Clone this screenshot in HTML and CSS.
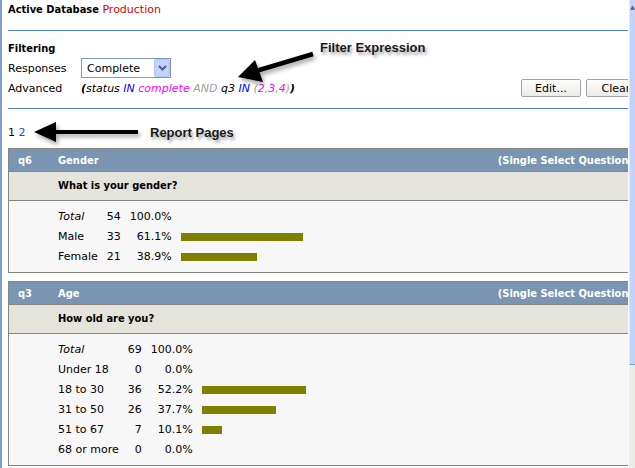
FILE: index.html
```html
<!DOCTYPE html>
<html lang="en">
<head>
  <meta charset="UTF-8" />
  <title>Report</title>
  <link rel="stylesheet" href="styles.css">
</head>
<body>
  <div class="window">
    <main class="page">
      <div class="content">
        <div class="active-db"><b>Active Database</b> <span class="db-name">Production</span></div>
        <div class="rule"></div>

        <!-- Filtering -->
        <section class="filtering">
          <h3>Filtering</h3>
          <div class="filter-row">
            <label>Responses</label>
            <div class="select">
              <span>Complete</span>
              <span class="select-btn">
                <svg width="9" height="6" viewBox="0 0 9 6"><path d="M1 1 L4.5 4.5 L8 1" fill="none" stroke="#4d6185" stroke-width="2"/></svg>
              </span>
            </div>
          </div>
          <div class="filter-row">
            <label>Advanced</label>
            <div class="expr"><b>(</b>status <span class="kw">IN</span> <span class="val">complete</span> <span class="op">AND</span> q3 <span class="kw">IN</span> <span class="op">(</span><span class="val">2</span><span class="op">,</span><span class="val">3</span><span class="op">,</span><span class="val">4</span><span class="op">)</span><b>)</b></div>
            <div class="buttons">
              <button>Edit...</button>
              <button>Clear</button>
            </div>
          </div>
        </section>
        <div class="rule rule-low"></div>

        <!-- Pages -->
        <div class="pager">
          <div class="pages">1 <a href="#">2</a></div>
          <svg class="arrow" width="112" height="22" viewBox="0 0 112 22">
            <defs>
              <filter id="shade" x="-20%" y="-40%" width="150%" height="200%">
                <feDropShadow dx="2" dy="3" stdDeviation="2" flood-color="#000" flood-opacity="0.35"/>
              </filter>
            </defs>
            <g filter="url(#shade)">
              <rect x="24" y="9" width="84" height="4" fill="#000"/>
              <polygon points="4,11 26,1 26,21" fill="#000"/>
            </g>
          </svg>
          <span class="callout-label">Report Pages</span>
        </div>

        <!-- q6 -->
        <div class="question">
          <div class="q-head"><span class="q-num">q6</span><span class="q-title">Gender</span><span class="q-type">(Single Select Question)</span></div>
          <div class="q-text">What is your gender?</div>
          <div class="q-body">
            <table>
              <tr><td><i>Total</i></td><td class="num">54</td><td class="num">100.0%</td><td></td></tr>
              <tr><td>Male</td><td class="num">33</td><td class="num">61.1%</td><td><div class="bar" style="width:122px"></div></td></tr>
              <tr><td>Female</td><td class="num">21</td><td class="num">38.9%</td><td><div class="bar" style="width:76px"></div></td></tr>
            </table>
          </div>
        </div>

        <!-- q3 -->
        <div class="question">
          <div class="q-head"><span class="q-num">q3</span><span class="q-title">Age</span><span class="q-type">(Single Select Question)</span></div>
          <div class="q-text">How old are you?</div>
          <div class="q-body">
            <table>
              <tr><td><i>Total</i></td><td class="num">69</td><td class="num">100.0%</td><td></td></tr>
              <tr><td>Under 18</td><td class="num">0</td><td class="num">0.0%</td><td></td></tr>
              <tr><td>18 to 30</td><td class="num">36</td><td class="num">52.2%</td><td><div class="bar" style="width:104px"></div></td></tr>
              <tr><td>31 to 50</td><td class="num">26</td><td class="num">37.7%</td><td><div class="bar" style="width:74px"></div></td></tr>
              <tr><td>51 to 67</td><td class="num">7</td><td class="num">10.1%</td><td><div class="bar" style="width:20px"></div></td></tr>
              <tr><td>68 or more</td><td class="num">0</td><td class="num">0.0%</td><td></td></tr>
            </table>
          </div>
        </div>
      </div>

      <!-- note pointing at the expression -->
      <div class="callout-filter">
        <svg width="88" height="50" viewBox="0 0 88 50">
          <g filter="url(#shade)">
            <line x1="26" y1="33" x2="83" y2="16" stroke="#000" stroke-width="4.5"/>
            <polygon points="8,39 25,22 33,44" fill="#000"/>
          </g>
        </svg>
        <span class="callout-label">Filter Expression</span>
      </div>
    </main>

    <div class="scrollbar">
      <div class="thumb"><span class="up">&#9650;</span></div>
    </div>
  </div>
</body>
</html>
```

FILE: styles.css
```css
html, body {
  margin: 0;
  padding: 0;
  background: #ffffff;
}
body {
  font-family: "DejaVu Sans", Verdana, sans-serif;
  font-size: 11px;
  color: #000;
  height: 468px;
  overflow: hidden;
}
/* bold labels use the narrower cut */
b,
.filtering h3,
.q-head,
.q-text {
  font-family: "DejaVu Sans Condensed", "DejaVu Sans", sans-serif;
  font-weight: bold;
}
.window {
  display: flex;
  height: 468px;
}
.page {
  position: relative;
  flex: 0 0 628px;
  box-sizing: border-box;
  border-left: 2px solid #7f9dd3;
  overflow: hidden;
  padding-top: 3px;
}
.content {
  width: 638px;
  padding-left: 6px;
}
.active-db {
  line-height: 13px;
}
.db-name {
  color: #d40000;
}
.rule {
  height: 1px;
  background: #4d82d0;
  margin-top: 14px;
}
.rule-low {
  margin-top: 10px;
}

/* filtering block */
.filtering {
  padding-top: 11px;
}
.filtering h3 {
  margin: 0;
  font-size: 11px;
  line-height: 13px;
}
.filter-row {
  display: flex;
  align-items: center;
  height: 20px;
}
.filter-row:first-of-type {
  margin-top: 3px;
}
.filter-row label {
  width: 73px;
  flex: none;
}
.select {
  box-sizing: border-box;
  width: 90px;
  height: 20px;
  border: 1px solid #7f9db9;
  display: flex;
  align-items: center;
  justify-content: space-between;
  padding-left: 5px;
}
.select-btn {
  box-sizing: border-box;
  width: 16px;
  height: 18px;
  background: #c3d3fd;
  border: 1px solid #b0c4f0;
  border-radius: 2px;
  display: flex;
  align-items: center;
  justify-content: center;
}
.expr {
  flex: 1;
  font-style: italic;
}
.expr b {
  font-family: "DejaVu Sans", sans-serif;
}
.kw {
  color: #0000ff;
}
.val {
  color: #ff00ff;
}
.op {
  color: #a0a0a0;
}
.buttons {
  display: flex;
  gap: 5px;
}
.buttons button {
  width: 60px;
  height: 18px;
  padding: 0;
  font-family: inherit;
  font-size: 11px;
  color: #000;
  background: linear-gradient(#fdfdfd, #ecebe6);
  border: 1px solid #a3a3a3;
  border-radius: 2px;
}

/* pages */
.pager {
  display: flex;
  align-items: center;
  height: 22px;
  margin-top: 12px;
}
.pages {
  width: 22px;
}
.pages a {
  color: #2a48c8;
  text-decoration: none;
}
.arrow {
  overflow: visible;
}
.callout-label {
  font-family: "Liberation Sans", Arial, sans-serif;
  font-weight: bold;
  font-size: 13px;
  color: #1a1a1a;
  text-shadow: 2px 3px 3px rgba(0, 0, 0, 0.35);
  margin-left: 8px;
}
.callout-filter {
  position: absolute;
  left: 228px;
  top: 38px;
  display: flex;
  align-items: flex-start;
}
.callout-filter svg {
  overflow: visible;
}
.callout-filter .callout-label {
  margin-left: 2px;
  margin-top: 2px;
}

/* question tables */
.question {
  margin-top: 5px;
  margin-right: 6px;
  border: 1px solid #86867c;
}
.question + .question {
  margin-top: 8px;
}
.q-head {
  display: flex;
  align-items: center;
  height: 22px;
  background: #7995b1;
  color: #fff;
  border-bottom: 1px solid #86867c;
}
.q-num {
  box-sizing: border-box;
  width: 49px;
  padding-left: 9px;
}
.q-type {
  margin-left: auto;
  padding-right: 6px;
}
.q-text {
  height: 28px;
  line-height: 28px;
  padding-left: 49px;
  background: #e4e4dc;
  border-bottom: 1px solid #86867c;
}
.q-body {
  background: #f7f7f7;
  padding: 6px 0 5px 49px;
}
.q-body table {
  border-collapse: collapse;
}
.q-body td {
  padding: 0 9px 0 0;
  height: 20px;
  line-height: 20px;
  white-space: nowrap;
}
.q-body td.num {
  text-align: right;
}
.bar {
  height: 8px;
  background: #808000;
}

/* window scrollbar */
.scrollbar {
  flex: 1;
  background: #eeede5;
  border-left: 1px solid #fbfbf8;
}
.thumb {
  height: 365px;
  background: #c3d3fd;
  border-left: 1px solid #dfe8fe;
  border-bottom: 1px solid #7f9dd3;
  box-sizing: border-box;
  text-align: center;
}
.up {
  display: block;
  font-size: 6px;
  line-height: 14px;
  color: #4d6185;
}
```
